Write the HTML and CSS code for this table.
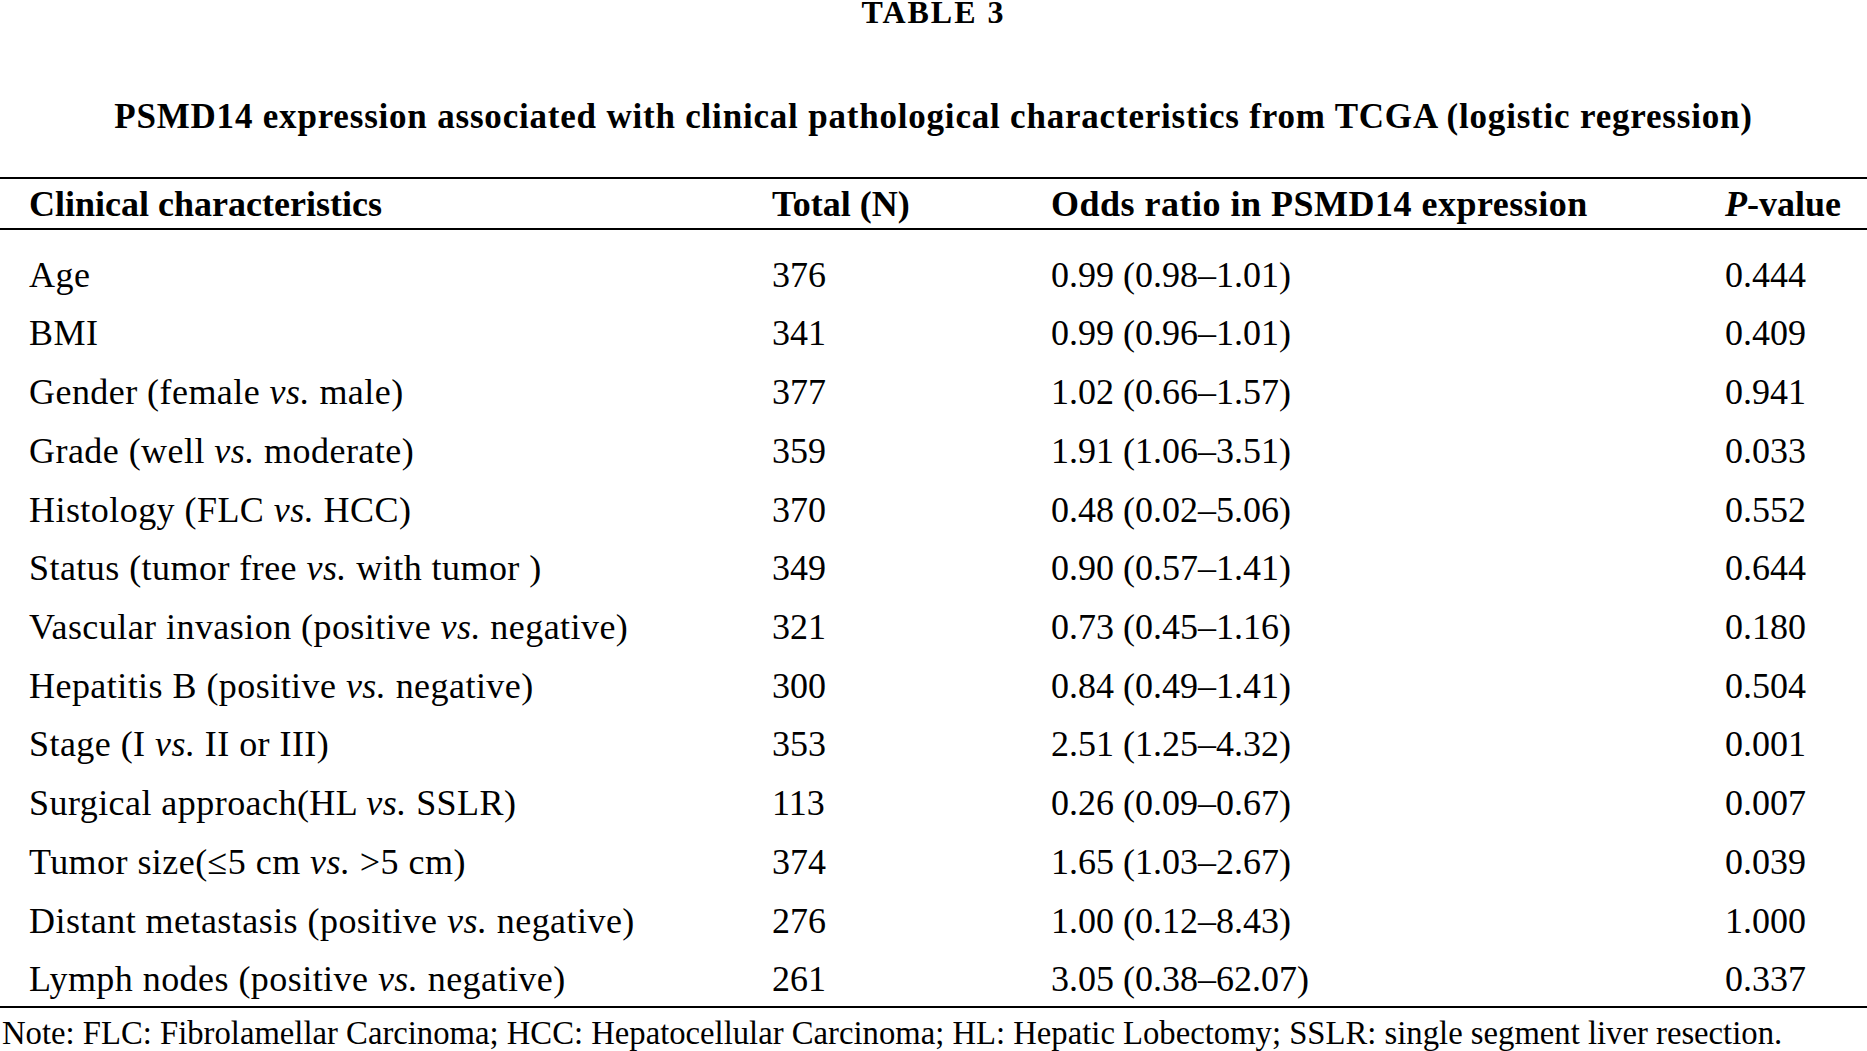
FILE: index.html
```html
<!DOCTYPE html>
<html lang="en">
<head>
<meta charset="utf-8">
<title>Table 3</title>
<link rel="stylesheet" href="styles.css">
</head>
<body>
<div class="page">
  <h1 class="label">TABLE 3</h1>
  <h2 class="caption">PSMD14 expression associated with clinical pathological characteristics from TCGA (logistic regression)</h2>
  <table class="data">
    <colgroup>
      <col class="c1"><col class="c2"><col class="c3"><col class="c4">
    </colgroup>
    <thead>
      <tr>
        <th class="first">Clinical characteristics</th>
        <th>Total (N)</th>
        <th class="odds">Odds ratio in PSMD14 expression</th>
        <th><i>P</i>-value</th>
      </tr>
    </thead>
    <tbody>
      <tr class="top"><td class="first">Age</td><td>376</td><td>0.99 (0.98–1.01)</td><td>0.444</td></tr>
      <tr><td class="first">BMI</td><td>341</td><td>0.99 (0.96–1.01)</td><td>0.409</td></tr>
      <tr><td class="first">Gender (female <i>vs.</i> male)</td><td>377</td><td>1.02 (0.66–1.57)</td><td>0.941</td></tr>
      <tr><td class="first">Grade (well <i>vs.</i> moderate)</td><td>359</td><td>1.91 (1.06–3.51)</td><td>0.033</td></tr>
      <tr><td class="first">Histology (FLC <i>vs.</i> HCC)</td><td>370</td><td>0.48 (0.02–5.06)</td><td>0.552</td></tr>
      <tr><td class="first">Status (tumor free <i>vs.</i> with tumor )</td><td>349</td><td>0.90 (0.57–1.41)</td><td>0.644</td></tr>
      <tr><td class="first">Vascular invasion (positive <i>vs.</i> negative)</td><td>321</td><td>0.73 (0.45–1.16)</td><td>0.180</td></tr>
      <tr><td class="first">Hepatitis B (positive <i>vs.</i> negative)</td><td>300</td><td>0.84 (0.49–1.41)</td><td>0.504</td></tr>
      <tr><td class="first">Stage (I <i>vs.</i> II or III)</td><td>353</td><td>2.51 (1.25–4.32)</td><td>0.001</td></tr>
      <tr><td class="first">Surgical approach(HL <i>vs.</i> SSLR)</td><td>113</td><td>0.26 (0.09–0.67)</td><td>0.007</td></tr>
      <tr><td class="first">Tumor size(≤5 cm <i>vs.</i> &gt;5 cm)</td><td>374</td><td>1.65 (1.03–2.67)</td><td>0.039</td></tr>
      <tr><td class="first">Distant metastasis (positive <i>vs.</i> negative)</td><td>276</td><td>1.00 (0.12–8.43)</td><td>1.000</td></tr>
      <tr><td class="first">Lymph nodes (positive <i>vs.</i> negative)</td><td>261</td><td>3.05 (0.38–62.07)</td><td>0.337</td></tr>
    </tbody>
  </table>
  <p class="note">Note: FLC: Fibrolamellar Carcinoma; HCC: Hepatocellular Carcinoma; HL: Hepatic Lobectomy; SSLR: single segment liver resection.</p>
</div>
</body>
</html>
```
FILE: styles.css
```css
html, body {
  margin: 0;
  padding: 0;
  background: #ffffff;
}

body {
  font-family: "Liberation Serif", "Times New Roman", serif;
  color: #000000;
}

.page {
  width: 1867px;
  height: 1051px;
  overflow: hidden;
}

.label {
  margin: 0;
  font-size: 32px;
  font-weight: bold;
  line-height: 24.4px;
  letter-spacing: 2px;
  text-align: center;
}

.caption {
  margin: 72.6px 0 0 0;
  font-size: 35px;
  font-weight: bold;
  line-height: 40px;
  letter-spacing: 0.8px;
  text-align: center;
  white-space: nowrap;
}

.data {
  margin-top: 40px;
  width: 1867px;
  table-layout: fixed;
  border-collapse: collapse;
  border-spacing: 0;
  font-size: 36px;
  line-height: 40px;
}

.c1 { width: 772px; }
.c2 { width: 279px; }
.c3 { width: 674px; }
.c4 { width: 142px; }

.data thead tr {
  border-top: 2px solid #000000;
  border-bottom: 2px solid #000000;
}

.data th {
  font-weight: bold;
  text-align: left;
  padding: 5px 0 4px 0;
  white-space: nowrap;
}

.data th.odds {
  letter-spacing: 0.5px;
}

.data td {
  text-align: left;
  padding: 12.6px 0 6.15px 0;
  white-space: nowrap;
}

.data td.first {
  letter-spacing: 0.45px;
}

.data tbody tr.top td {
  padding-top: 24.6px;
}

.data tbody tr:last-child {
  border-bottom: 2px solid #000000;
}

.data .first {
  padding-left: 29px;
}

.note {
  margin: 9px 0 0 2px;
  font-size: 32.7px;
  line-height: 32px;
  white-space: nowrap;
}
```
